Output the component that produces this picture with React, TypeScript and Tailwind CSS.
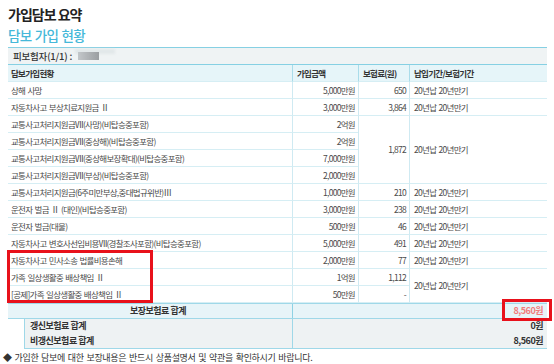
type Row = {
  name: string;
  amt: string;
  prem?: string;
  premSpan?: number;
  period?: string;
  periodSpan?: number;
};

const rows: Row[] = [
  { name: "상해 사망", amt: "5,000만원", prem: "650", period: "20년납 20년만기" },
  { name: "자동차사고 부상치료지원금 Ⅱ", amt: "3,000만원", prem: "3,864", period: "20년납 20년만기" },
  { name: "교통사고처리지원금Ⅶ(사망)(비탑승중포함)", amt: "2억원", prem: "1,872", premSpan: 4, period: "20년납 20년만기", periodSpan: 4 },
  { name: "교통사고처리지원금Ⅶ(중상해)(비탑승중포함)", amt: "2억원" },
  { name: "교통사고처리지원금Ⅶ(중상해보장확대)(비탑승중포함)", amt: "7,000만원" },
  { name: "교통사고처리지원금Ⅶ(부상)(비탑승중포함)", amt: "2,000만원" },
  { name: "교통사고처리지원금(6주미만부상,중대법규위반)Ⅲ", amt: "1,000만원", prem: "210", period: "20년납 20년만기" },
  { name: "운전자 벌금 Ⅱ (대인)(비탑승중포함)", amt: "3,000만원", prem: "238", period: "20년납 20년만기" },
  { name: "운전자 벌금(대물)", amt: "500만원", prem: "46", period: "20년납 20년만기" },
  { name: "자동차사고 변호사선임비용Ⅶ(경찰조사포함)(비탑승중포함)", amt: "5,000만원", prem: "491", period: "20년납 20년만기" },
  { name: "자동차사고 민사소송 법률비용손해", amt: "2,000만원", prem: "77", period: "20년납 20년만기" },
  { name: "가족 일상생활중 배상책임 Ⅱ", amt: "1억원", prem: "1,112", period: "20년납 20년만기", periodSpan: 2 },
  { name: "[공제]가족 일상생활중 배상책임 Ⅱ", amt: "50만원", prem: "-" },
];

const cell = "flex items-center border-b border-[#d6eef4] h-full";

export default function App() {
  return (
    <div className="relative w-[554px] h-[364px] overflow-hidden bg-white pl-2 pt-[4px] font-['Noto_Sans_CJK_KR','Noto_Sans',sans-serif] text-[#4a4a4a]">
      {/* titles */}
      <h1 className="h-[21px] leading-[21px] text-[14px] font-bold tracking-[-1px] text-[#222]">가입담보 요약</h1>
      <h2 className="h-[22px] leading-[20px] text-[13.5px] font-medium tracking-[-0.7px] [word-spacing:1px] text-[#45b8d9]">담보 가입 현황</h2>

      {/* insured bar */}
      <div className="w-[539px] h-[18px] border-y border-[#86d0e3] bg-[#eff3f4] flex items-center pl-[5px] text-[9.5px] tracking-[-0.2px] text-[#333] font-medium">
        피보험자(1/1) :
        <span className="relative ml-[3px] inline-block w-[24px] h-[10px]">
          <span className="absolute left-0 -top-[2px] w-[40px] h-[5px] bg-[#e2e8ea] blur-[1px]" />
          <span className="absolute left-[3px] top-[1px] w-[21px] h-[8px] bg-gradient-to-r from-[#c3c7ca] to-[#9a9ea1] blur-[0.6px]" />
        </span>
      </div>

      {/* coverage table */}
      <div className="w-[539px] grid grid-cols-[284px_66px_51px_138px] auto-rows-[17px] text-[8.5px] tracking-[-0.7px] [word-spacing:1px]">
        <div className={`${cell} bg-[#e6f5f9] pl-[3px] font-semibold text-[#333]`}>담보가입현황</div>
        <div className={`${cell} bg-[#e6f5f9] border-l border-l-[#a9dcea] pl-[4px] font-semibold text-[#333]`}>가입금액</div>
        <div className={`${cell} bg-[#e6f5f9] border-l border-l-[#a9dcea] pl-[4px] font-semibold text-[#333]`}>보험료(원)</div>
        <div className={`${cell} bg-[#e6f5f9] border-l border-l-[#a9dcea] pl-[4px] font-semibold text-[#333]`}>납입기간/보험기간</div>

        {rows.map((r, i) => (
          <div key={i} className="contents">
            <div className={`${cell} pl-[3px]`}>{r.name}</div>
            <div className={`${cell} justify-end pr-[3px] border-l border-l-[#cfeaf2]`}>{r.amt}</div>
            {r.prem !== undefined && (
              <div
                className={`${cell} justify-end pr-[3px] border-l border-l-[#cfeaf2] ${r.premSpan === 4 ? "row-span-4" : ""}`}
              >
                {r.prem}
              </div>
            )}
            {r.period !== undefined && (
              <div
                className={`${cell} pl-[4px] border-l border-l-[#cfeaf2] ${r.periodSpan === 4 ? "row-span-4" : r.periodSpan === 2 ? "row-span-2" : ""}`}
              >
                {r.period}
              </div>
            )}
          </div>
        ))}
      </div>

      {/* totals */}
      <div className="w-[539px] text-[9px] tracking-[-0.5px] font-bold text-[#333]">
        <div className="flex h-[16px] border-y border-y-[#9fd8e8] bg-[#e7f4f8]">
          <div className="w-[284px] pl-[16px] flex items-center justify-center">보장보험료 합계</div>
          <div className="flex-1 flex items-center justify-end pr-[4px] border-l border-l-[#8fd2e4] text-[#f27b7b]">8,560원</div>
        </div>
        <div className="ml-[16px] border-l border-b border-[#9fd8e8] bg-[#eef2f3]">
          <div className="flex h-[14px]">
            <div className="w-[267px] pl-[5px] flex items-center">갱신보험료 합계</div>
            <div className="flex-1 flex items-center justify-end pr-[4px] border-l border-l-[#9fd8e8]">0원</div>
          </div>
          <div className="flex h-[15px]">
            <div className="w-[267px] pl-[5px] flex items-center">비갱신보험료 합계</div>
            <div className="flex-1 flex items-center justify-end pr-[4px] border-l border-l-[#9fd8e8]">8,560원</div>
          </div>
        </div>
      </div>

      <p className="-ml-[5px] h-[18px] leading-[18px] text-[9px] tracking-[-0.3px] [word-spacing:1px] text-[#333]">
        ◆ 가입한 담보에 대한 보장내용은 반드시 상품설명서 및 약관을 확인하시기 바랍니다.
      </p>

      {/* red annotation boxes */}
      <div className="absolute left-[7px] top-[250px] w-[146px] h-[53px] border-[3px] border-[#e8111b]" />
      <div className="absolute left-[502px] top-[299px] w-[50px] h-[22px] border-[3px] border-[#e8111b]" />
    </div>
  );
}
